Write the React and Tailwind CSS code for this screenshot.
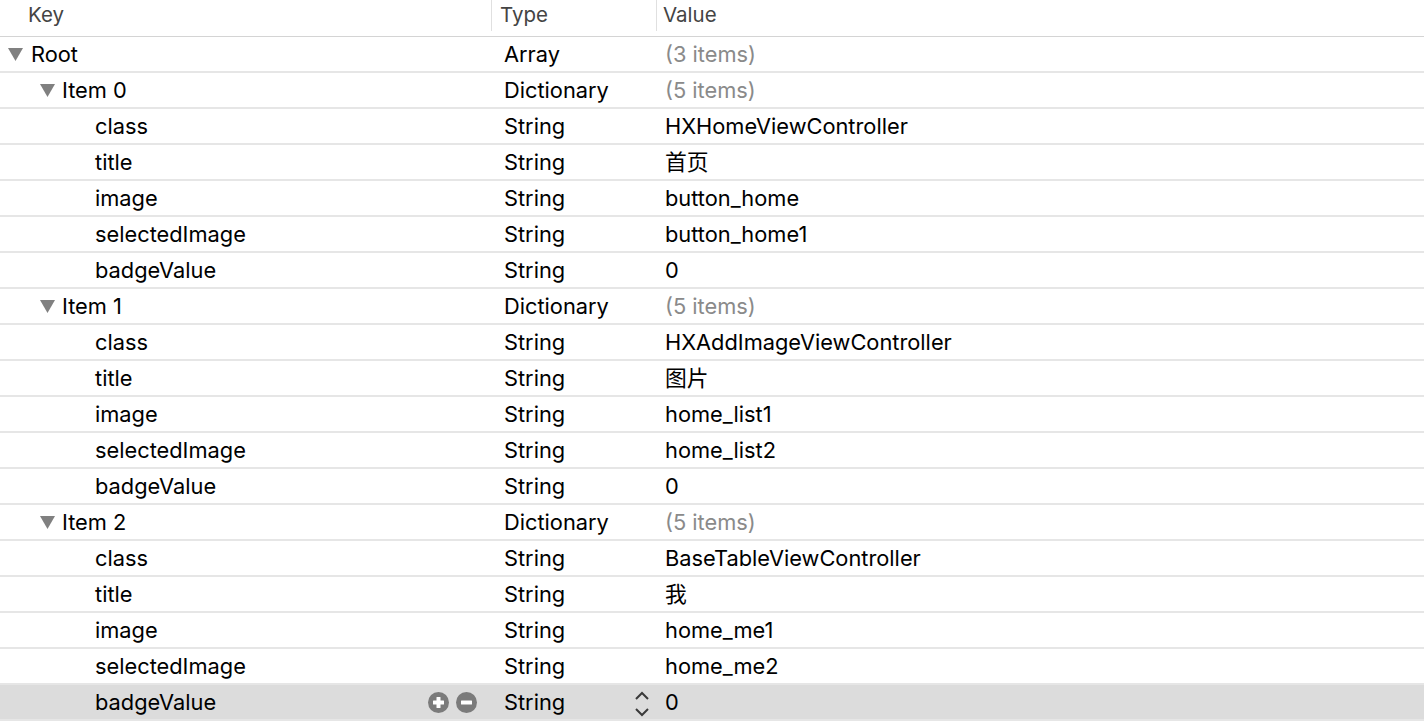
import React from "react";

const rows = [
  { key: "Root", level: 0, tri: true, type: "Array", value: "(3 items)", gray: true },
  { key: "Item 0", level: 1, tri: true, type: "Dictionary", value: "(5 items)", gray: true },
  { key: "class", level: 2, type: "String", value: "HXHomeViewController" },
  { key: "title", level: 2, type: "String", value: "首页" },
  { key: "image", level: 2, type: "String", value: "button_home" },
  { key: "selectedImage", level: 2, type: "String", value: "button_home1" },
  { key: "badgeValue", level: 2, type: "String", value: "0" },
  { key: "Item 1", level: 1, tri: true, type: "Dictionary", value: "(5 items)", gray: true },
  { key: "class", level: 2, type: "String", value: "HXAddImageViewController" },
  { key: "title", level: 2, type: "String", value: "图片" },
  { key: "image", level: 2, type: "String", value: "home_list1" },
  { key: "selectedImage", level: 2, type: "String", value: "home_list2" },
  { key: "badgeValue", level: 2, type: "String", value: "0" },
  { key: "Item 2", level: 1, tri: true, type: "Dictionary", value: "(5 items)", gray: true },
  { key: "class", level: 2, type: "String", value: "BaseTableViewController" },
  { key: "title", level: 2, type: "String", value: "我" },
  { key: "image", level: 2, type: "String", value: "home_me1" },
  { key: "selectedImage", level: 2, type: "String", value: "home_me2" },
  { key: "badgeValue", level: 2, type: "String", value: "0", selected: true },
];

function Triangle() {
  return (
    <svg width="15" height="13" viewBox="0 0 15 13" className="shrink-0">
      <polygon points="0,0 15,0 7.5,13" fill="#808080" />
    </svg>
  );
}

function CircleBtn({ plus }) {
  return (
    <svg width="21" height="21" viewBox="0 0 21 21">
      <circle cx="10.5" cy="10.5" r="10.5" fill="#7b7b7b" />
      <rect x="5" y="8.5" width="11" height="4" rx="0.5" fill="#fff" />
      {plus && <rect x="8.5" y="5" width="4" height="11" rx="0.5" fill="#fff" />}
    </svg>
  );
}

function UpDown() {
  return (
    <svg width="16" height="26" viewBox="0 0 16 26">
      <polyline points="2,8 8,2 14,8" fill="none" stroke="#3a3a3a" strokeWidth="2" />
      <polyline points="2,18 8,24 14,18" fill="none" stroke="#3a3a3a" strokeWidth="2" />
    </svg>
  );
}

export default function App() {
  return (
    <div
      className="w-[1424px] h-[722px] bg-white overflow-hidden text-[21.8px] text-black"
      style={{ fontFamily: "Inter, 'Noto Sans CJK SC', sans-serif" }}
    >
      <div className="flex h-[37px] border-b border-[#d4d4d4] text-[#444] text-[20.5px]">
        <div className="w-[491px] pl-[28px] flex items-center h-[31px]">Key</div>
        <div className="w-[165px] flex items-center h-[31px] border-l border-[#e0e0e0] pl-[8px]">Type</div>
        <div className="flex-1 flex items-center h-[31px] border-l border-[#e0e0e0] pl-[6px]">Value</div>
      </div>
      {rows.map((r, i) => (
        <div
          key={i}
          className={`flex h-[36px] border-b-2 border-[#e6e6e6] items-center ${r.selected ? "bg-[#dcdcdc]" : ""}`}
        >
          <div className="w-[491px] flex items-center h-full">
            {r.level === 0 && (
              <div className="flex items-center pl-[8px] gap-[8px]">
                <Triangle />
                <span>{r.key}</span>
              </div>
            )}
            {r.level === 1 && (
              <div className="flex items-center pl-[40px] gap-[7px]">
                <Triangle />
                <span>{r.key}</span>
              </div>
            )}
            {r.level === 2 && <span className="pl-[95px]">{r.key}</span>}
            {r.selected && (
              <div className="ml-auto mr-[14px] flex gap-[7px]">
                <CircleBtn plus />
                <CircleBtn />
              </div>
            )}
          </div>
          <div className="w-[165px] pl-[13px] flex items-center h-full relative">
            <span>{r.type}</span>
            {r.selected && (
              <div className="absolute left-[143px] top-[6px]">
                <UpDown />
              </div>
            )}
          </div>
          <div className={`flex-1 pl-[9px] ${r.gray ? "text-[#8a8a8a]" : ""}`}>{r.value}</div>
        </div>
      ))}
    </div>
  );
}
